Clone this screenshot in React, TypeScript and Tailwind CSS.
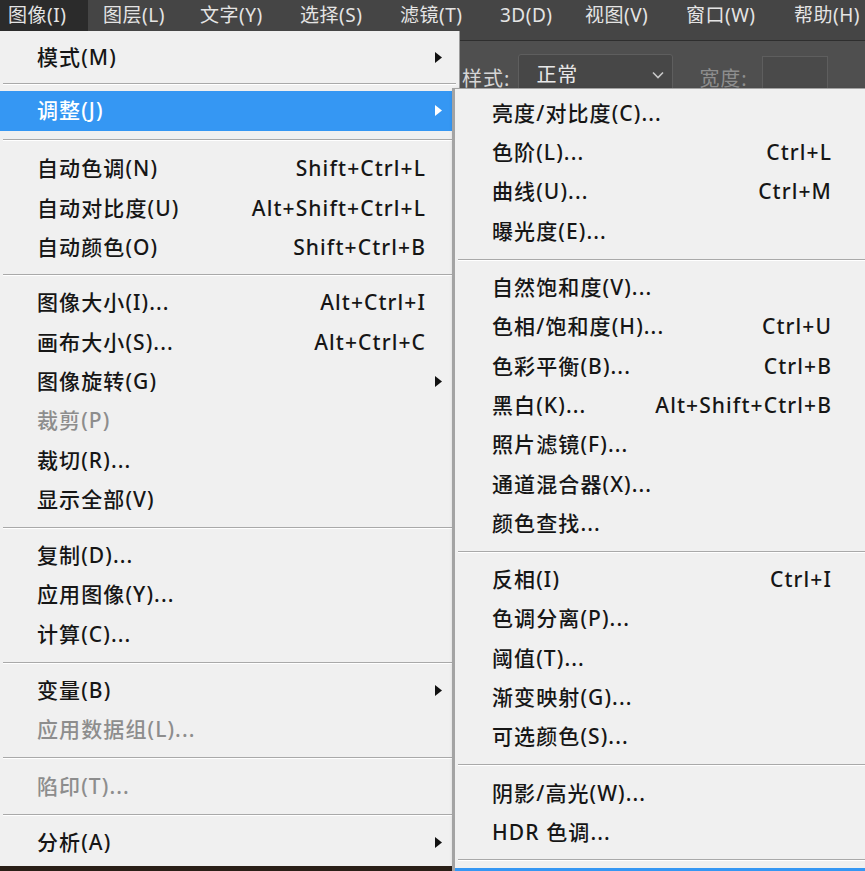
import React from 'react';

type Row =
  | { kind: 'item'; label: string; shortcut?: string; submenu?: boolean; disabled?: boolean; active?: boolean }
  | { kind: 'sep'; h?: string };

const FONT = { fontFamily: '"Noto Sans", "Noto Sans CJK SC", sans-serif' };

// top menu bar entries (widths copied from the screenshot)
const MENUBAR = [
  { label: '图像(I)', cls: 'w-[88px] pl-[8px] bg-[#2b2b2b]' },
  { label: '图层(L)', cls: 'w-[104px] pl-[15px]' },
  { label: '文字(Y)', cls: 'w-[100px] pl-[8px]' },
  { label: '选择(S)', cls: 'w-[100px] pl-[8px]' },
  { label: '滤镜(T)', cls: 'w-[100px] pl-[8px]' },
  { label: '3D(D)', cls: 'w-[85px] pl-[8px]' },
  { label: '视图(V)', cls: 'w-[101px] pl-[8px]' },
  { label: '窗口(W)', cls: 'w-[108px] pl-[8px]' },
  { label: '帮助(H)', cls: 'w-[100px] pl-[8px]' },
];

const MAIN_MENU: Row[] = [
  { kind: 'item', label: '模式(M)', submenu: true },
  { kind: 'sep', h: 'h-[14px]' },
  { kind: 'item', label: '调整(J)', submenu: true, active: true },
  { kind: 'sep', h: 'h-[19px]' },
  { kind: 'item', label: '自动色调(N)', shortcut: 'Shift+Ctrl+L' },
  { kind: 'item', label: '自动对比度(U)', shortcut: 'Alt+Shift+Ctrl+L' },
  { kind: 'item', label: '自动颜色(O)', shortcut: 'Shift+Ctrl+B' },
  { kind: 'sep', h: 'h-[16px]' },
  { kind: 'item', label: '图像大小(I)...', shortcut: 'Alt+Ctrl+I' },
  { kind: 'item', label: '画布大小(S)...', shortcut: 'Alt+Ctrl+C' },
  { kind: 'item', label: '图像旋转(G)', submenu: true },
  { kind: 'item', label: '裁剪(P)', disabled: true },
  { kind: 'item', label: '裁切(R)...' },
  { kind: 'item', label: '显示全部(V)' },
  { kind: 'sep' },
  { kind: 'item', label: '复制(D)...' },
  { kind: 'item', label: '应用图像(Y)...' },
  { kind: 'item', label: '计算(C)...' },
  { kind: 'sep' },
  { kind: 'item', label: '变量(B)', submenu: true },
  { kind: 'item', label: '应用数据组(L)...', disabled: true },
  { kind: 'sep' },
  { kind: 'item', label: '陷印(T)...', disabled: true },
  { kind: 'sep' },
  { kind: 'item', label: '分析(A)', submenu: true },
];

const ADJUST_MENU: Row[] = [
  { kind: 'item', label: '亮度/对比度(C)...' },
  { kind: 'item', label: '色阶(L)...', shortcut: 'Ctrl+L' },
  { kind: 'item', label: '曲线(U)...', shortcut: 'Ctrl+M' },
  { kind: 'item', label: '曝光度(E)...' },
  { kind: 'sep', h: 'h-[17px]' },
  { kind: 'item', label: '自然饱和度(V)...' },
  { kind: 'item', label: '色相/饱和度(H)...', shortcut: 'Ctrl+U' },
  { kind: 'item', label: '色彩平衡(B)...', shortcut: 'Ctrl+B' },
  { kind: 'item', label: '黑白(K)...', shortcut: 'Alt+Shift+Ctrl+B' },
  { kind: 'item', label: '照片滤镜(F)...' },
  { kind: 'item', label: '通道混合器(X)...' },
  { kind: 'item', label: '颜色查找...' },
  { kind: 'sep', h: 'h-[17px]' },
  { kind: 'item', label: '反相(I)', shortcut: 'Ctrl+I' },
  { kind: 'item', label: '色调分离(P)...' },
  { kind: 'item', label: '阈值(T)...' },
  { kind: 'item', label: '渐变映射(G)...' },
  { kind: 'item', label: '可选颜色(S)...' },
  { kind: 'sep', h: 'h-[17px]' },
  { kind: 'item', label: '阴影/高光(W)...' },
  { kind: 'item', label: 'HDR 色调...' },
  { kind: 'sep', h: 'h-[16px]' },
];

const Arrow: React.FC<{ white?: boolean }> = ({ white }) => (
  <svg width="7" height="11" viewBox="0 0 7 11" className="block">
    <polygon points="0,0 7,5.5 0,11" fill={white ? '#ffffff' : '#111111'} />
  </svg>
);

const Separator: React.FC<{ h?: string; inset: string }> = ({ h, inset }) => (
  <div className={`${h ?? 'h-[17px]'} flex flex-col justify-center ${inset}`}>
    <div className="h-px bg-[#a9a9a9]" />
    <div className="h-px bg-white" />
  </div>
);

const MenuRows: React.FC<{ rows: Row[]; rowCls: string; sepInset: string; arrows: boolean }> = ({
  rows,
  rowCls,
  sepInset,
  arrows,
}) => (
  <>
    {rows.map((r, i) => {
      if (r.kind === 'sep') return <Separator key={i} h={r.h} inset={sepInset} />;
      const color = r.active ? 'text-white' : r.disabled ? 'text-[#8d8d8d]' : 'text-[#161616]';
      return (
        <div
          key={i}
          className={`h-[39.3px] flex items-center ${rowCls} ${r.active ? 'bg-[#3597f3]' : ''} ${color}`}
        >
          <span className="whitespace-nowrap">{r.label}</span>
          <span className="ml-auto whitespace-nowrap">{r.shortcut}</span>
          {arrows && (
            <span className="w-[16px] flex justify-end">{r.submenu && <Arrow white={r.active} />}</span>
          )}
        </div>
      );
    })}
  </>
);

export default function App() {
  return (
    <div className="relative w-[865px] h-[871px] overflow-hidden bg-[#4f4f4f]" style={FONT}>
      {/* menu bar */}
      <div className="h-[41px] bg-[#454545] border-b border-[#2e2e2e] flex items-start text-[19px] text-[#e4e4e4] tracking-[0.5px]">
        {MENUBAR.map((m) => (
          <div key={m.label} className={`h-[31px] flex items-center shrink-0 whitespace-nowrap ${m.cls}`}>
            {m.label}
          </div>
        ))}
      </div>

      {/* options bar behind the menus */}
      <div className="flex items-start pl-[462px] pt-[13px] text-[20px] tracking-[1px]">
        <span className="mt-[10px] text-[#d6d6d6]">样式:</span>
        <div className="ml-[8px] w-[155px] h-[42px] rounded-[3px] border border-[#5e5e5e] bg-[#474747] flex items-center pl-[17px] pr-[8px] text-[#e8e8e8]">
          <span>正常</span>
          <svg width="12" height="8" viewBox="0 0 12 8" className="ml-auto">
            <polyline points="1,1.5 6,6.5 11,1.5" fill="none" stroke="#c8c8c8" strokeWidth="1.6" />
          </svg>
        </div>
        <span className="ml-[26px] mt-[10px] text-[#8e8e8e]">宽度:</span>
        <div className="ml-[14px] mt-[2px] w-[66px] h-[40px] border border-[#5e5e5e] bg-[#4a4a4a]" />
      </div>

      {/* image edge under the menu */}
      <div className="absolute left-0 bottom-0 w-[460px] h-[6px] bg-[#2a1f17]" />

      {/* 图像 menu */}
      <div className="absolute left-0 top-[31px] w-[460px] h-[835px] bg-[#f0f0f0] border-r border-[#9c9c9c] pt-[7px] text-[21px] tracking-[1.1px] font-medium">
        <MenuRows rows={MAIN_MENU} rowCls="pl-[37px] pr-[17px]" sepInset="mx-[3px]" arrows />
      </div>

      {/* 调整 submenu */}
      <div className="absolute left-[452px] top-[88px] w-[425px] h-[790px] bg-[#f0f0f0] border-l-[3px] border-t border-[#a3a3a3] pt-[5px] text-[21px] tracking-[1.1px] font-medium shadow-[2px_2px_4px_rgba(0,0,0,0.3)]">
        <MenuRows rows={ADJUST_MENU} rowCls="pl-[37px] pr-[45px]" sepInset="mx-[3px] mr-[8px]" arrows={false} />
        <div className="h-[20px] bg-[#3597f3]" />
      </div>
    </div>
  );
}
